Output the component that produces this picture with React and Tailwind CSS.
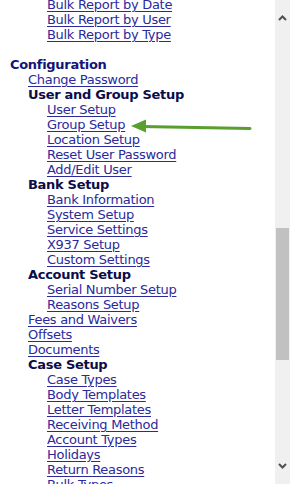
import React from 'react';

const rows = [
    { t: 'Bulk Report by Date', l: 2, link: true },
    { t: 'Bulk Report by User', l: 2, link: true },
    { t: 'Bulk Report by Type', l: 2, link: true },
    { t: '', l: 0 },
    { t: 'Configuration', l: 0, head: true },
    { t: 'Change Password', l: 1, link: true },
    { t: 'User and Group Setup', l: 1 },
    { t: 'User Setup', l: 2, link: true },
    { t: 'Group Setup', l: 2, link: true },
    { t: 'Location Setup', l: 2, link: true },
    { t: 'Reset User Password', l: 2, link: true },
    { t: 'Add/Edit User', l: 2, link: true },
    { t: 'Bank Setup', l: 1 },
    { t: 'Bank Information', l: 2, link: true },
    { t: 'System Setup', l: 2, link: true },
    { t: 'Service Settings', l: 2, link: true },
    { t: 'X937 Setup', l: 2, link: true },
    { t: 'Custom Settings', l: 2, link: true },
    { t: 'Account Setup', l: 1 },
    { t: 'Serial Number Setup', l: 2, link: true },
    { t: 'Reasons Setup', l: 2, link: true },
    { t: 'Fees and Waivers', l: 1, link: true },
    { t: 'Offsets', l: 1, link: true },
    { t: 'Documents', l: 1, link: true },
    { t: 'Case Setup', l: 1 },
    { t: 'Case Types', l: 2, link: true },
    { t: 'Body Templates', l: 2, link: true },
    { t: 'Letter Templates', l: 2, link: true },
    { t: 'Receiving Method', l: 2, link: true },
    { t: 'Account Types', l: 2, link: true },
    { t: 'Holidays', l: 2, link: true },
    { t: 'Return Reasons', l: 2, link: true },
    { t: 'Bulk Types', l: 2, link: true },
];

const indent = ['pl-[10px]', 'pl-[28px]', 'pl-[47px]'];

function Row({ row }) {
    if (!row.t) return <div className="h-[15px]" />;
    return (
        <div className={`${indent[row.l]} h-[15px] whitespace-nowrap`}>
            {row.link ? (
                <a href="#" className="text-[#2a2a9c] underline underline-offset-[2px]">{row.t}</a>
            ) : (
                <span className={`font-bold ${row.head ? 'text-[#141478]' : 'text-[#0c0c4a]'}`}>{row.t}</span>
            )}
        </div>
    );
}

function Chevron({ up }) {
    return (
        <svg width="9" height="6" viewBox="0 0 9 6">
            <path
                d={up ? 'M1 5 L4.5 1.5 L8 5' : 'M1 1 L4.5 4.5 L8 1'}
                fill="none"
                stroke="#505050"
                strokeWidth="2"
            />
        </svg>
    );
}

export default function App() {
    return (
        <div className="w-[290px] h-[484px] flex bg-white overflow-hidden" style={{ fontFamily: '"DejaVu Sans", Verdana, sans-serif' }}>
            <div className="relative flex-1 overflow-hidden text-[13px] leading-[15px] tracking-[-0.3px]">
                <div className="mt-[-3px]">
                    {rows.map((row, i) => (
                        <Row key={i} row={row} />
                    ))}
                </div>

                {/* green pointer arrow */}
                <svg className="absolute left-0 top-0" width="275" height="484">
                    <line x1="142" y1="126.5" x2="250" y2="128.5" stroke="#5a9e2f" strokeWidth="3" strokeLinecap="round" />
                    <polygon points="131,126 146,119.5 146,132.5" fill="#5a9e2f" />
                </svg>
            </div>

            <div className="w-[15px] bg-[#f0f0f0] flex flex-col items-center">
                <div className="h-[35px] flex items-center justify-center">
                    <Chevron up />
                </div>
                <div className="mt-[193px] w-[13px] h-[132px] bg-[#c1c1c1]" />
                <div className="flex-1" />
                <div className="h-[37px] flex items-center justify-center">
                    <Chevron />
                </div>
            </div>
        </div>
    );
}
